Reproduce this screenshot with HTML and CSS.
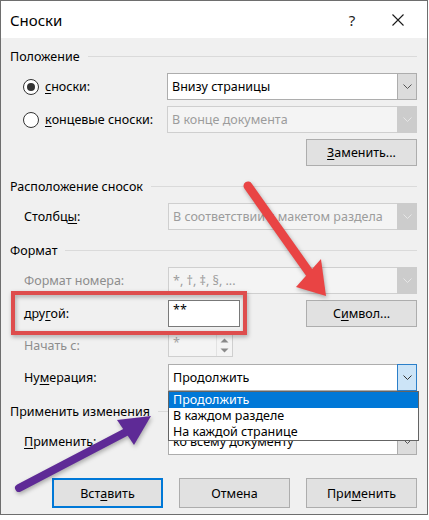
FILE: index.html
```html
<!DOCTYPE html>
<html lang="ru">
<head>
    <meta charset="UTF-8">
    <title>Сноски</title>
    <link rel="stylesheet" href="styles.css">
</head>
<body>
    <div class="dialog">
        <div class="titlebar">
            <span class="title">Сноски</span>
            <span class="cap-btn help">?</span>
            <span class="cap-btn close">
                <svg width="12" height="12" viewBox="0 0 12 12"><path d="M0.5 0.5 L11.5 11.5 M11.5 0.5 L0.5 11.5" stroke="#1a1a1a" stroke-width="1.1" fill="none"/></svg>
            </span>
        </div>

        <div class="content">
            <!-- Положение -->
            <div class="group">Положение</div>
            <div class="row">
                <div class="label radio"><span class="circle on"></span><u>с</u>носки:</div>
                <div class="select">
                    <span class="val">Внизу страницы</span>
                    <span class="drop"><svg width="9" height="5" viewBox="0 0 9 5"><path d="M0.5 0.5 L4.5 4.5 L8.5 0.5" stroke="#555" fill="none"/></svg></span>
                </div>
            </div>
            <div class="row">
                <div class="label radio"><span class="circle"></span><u>к</u>онцевые сноски:</div>
                <div class="select off">
                    <span class="val">В конце документа</span>
                    <span class="drop"><svg width="9" height="5" viewBox="0 0 9 5"><path d="M0.5 0.5 L4.5 4.5 L8.5 0.5" stroke="#e6e6e6" fill="none"/></svg></span>
                </div>
            </div>
            <div class="row right">
                <div class="btn"><u>З</u>аменить...</div>
            </div>

            <!-- Расположение сносок -->
            <div class="group">Расположение сносок</div>
            <div class="row">
                <div class="label">Столбц<u>ы</u>:</div>
                <div class="select off">
                    <span class="val">В соответствии с макетом раздела</span>
                    <span class="drop"><svg width="9" height="5" viewBox="0 0 9 5"><path d="M0.5 0.5 L4.5 4.5 L8.5 0.5" stroke="#e6e6e6" fill="none"/></svg></span>
                </div>
            </div>

            <!-- Формат -->
            <div class="group">Формат</div>
            <div class="row">
                <div class="label dim">Формат номера:</div>
                <div class="select off">
                    <span class="val">*, †, ‡, §, ...</span>
                    <span class="drop"><svg width="9" height="5" viewBox="0 0 9 5"><path d="M0.5 0.5 L4.5 4.5 L8.5 0.5" stroke="#e6e6e6" fill="none"/></svg></span>
                </div>
            </div>
            <div class="row">
                <div class="label">дру<u>г</u>ой:</div>
                <div class="input">**</div>
                <div class="btn push"><span>С<u>и</u>мвол...</span></div>
            </div>
            <div class="row short">
                <div class="label dim">Начать с:</div>
                <div class="spin">
                    <span class="val">*</span>
                    <span class="spin-btns">
                        <svg width="9" height="5" viewBox="0 0 9 5"><path d="M0.5 4.5 L4.5 0.5 L8.5 4.5 Z" fill="#8a8a8a"/></svg>
                        <svg width="9" height="5" viewBox="0 0 9 5"><path d="M0.5 0.5 L4.5 4.5 L8.5 0.5 Z" fill="#8a8a8a"/></svg>
                    </span>
                </div>
            </div>
            <div class="row">
                <div class="label">Ну<u>м</u>ерация:</div>
                <div class="select open">
                    <span class="val">Продолжить</span>
                    <span class="drop"><svg width="9" height="5" viewBox="0 0 9 5"><path d="M0.5 0.5 L4.5 4.5 L8.5 0.5" stroke="#333" fill="none"/></svg></span>
                </div>
            </div>

            <!-- Применить изменения -->
            <div class="group">Применить изменения</div>
            <div class="row">
                <div class="label"><u>П</u>рименить:</div>
                <div class="select">
                    <span class="val">ко всему документу</span>
                    <span class="drop"><svg width="9" height="5" viewBox="0 0 9 5"><path d="M0.5 0.5 L4.5 4.5 L8.5 0.5" stroke="#555" fill="none"/></svg></span>
                </div>
            </div>

            <div class="actions">
                <div class="btn wide focus">Вст<u>а</u>вить</div>
                <div class="btn wide">Отмена</div>
                <div class="btn wide">При<u>м</u>енить</div>
            </div>
        </div>

        <!-- раскрытый список -->
        <ul class="listbox">
            <li class="sel">Продолжить</li>
            <li>В каждом разделе</li>
            <li>На каждой странице</li>
        </ul>

        <!-- пометки поверх скриншота -->
        <svg class="marks" width="429" height="520" viewBox="0 0 429 520">
            <rect x="13" y="293" width="232" height="40" fill="none" stroke="#de4d4d" stroke-width="4"/>
            <line x1="248" y1="186" x2="311" y2="275" stroke="#e94444" stroke-width="9" stroke-linecap="round"/>
            <polygon points="326,296 296,287 321,259" fill="#e94444"/>
            <line x1="19" y1="488" x2="128" y2="431" stroke="#5e2a96" stroke-width="8" stroke-linecap="round"/>
            <polygon points="151,416 117,420 134,445" fill="#5e2a96"/>
        </svg>
    </div>
</body>
</html>
```

FILE: styles.css
```css
body {
    margin: 0;
    background: #fff;
    font-family: "Noto Sans", "Open Sans", sans-serif;
    font-size: 12.5px;
    color: #000;
}

.dialog {
    position: relative;
    width: 428px;
    height: 515px;
    box-sizing: border-box;
    border: 1px solid #6e6e6e;
    background: #f0f0f0;
}

/* title bar */
.titlebar {
    height: 37px;
    background: #fff;
    display: flex;
    align-items: center;
    padding: 0 6px 0 9px;
}

.title {
    flex: 1;
    font-size: 15px;
}

.cap-btn {
    width: 46px;
    height: 37px;
    display: flex;
    align-items: center;
    justify-content: center;
    font-size: 15px;
    color: #222;
}

.content {
    padding: 8px 10px 0 9px;
}

/* group headers with line */
.group {
    display: flex;
    align-items: center;
    height: 20px;
    margin-top: 10px;
}

.group:first-child {
    margin-top: 0;
}

.group::after {
    content: '';
    flex: 1;
    height: 1px;
    background: #dadada;
    margin-left: 8px;
}

.row {
    display: flex;
    align-items: center;
    height: 27px;
    padding-left: 14px;
    margin-top: 6px;
}

.group + .row {
    margin-top: 7px;
}

.row.short {
    height: 25px;
}

.row.right {
    justify-content: flex-end;
}

.label {
    width: 144px;
    flex: none;
    white-space: nowrap;
}

.label.dim {
    color: #8d8d8d;
}

.radio {
    display: flex;
    align-items: center;
    margin-left: -1px;
}

.circle {
    width: 14px;
    height: 14px;
    border: 1px solid #333;
    border-radius: 50%;
    background: #fff;
    margin-right: 6px;
    position: relative;
}

.circle.on::after {
    content: '';
    position: absolute;
    left: 3px;
    top: 3px;
    width: 8px;
    height: 8px;
    border-radius: 50%;
    background: #333;
}

u {
    text-decoration-thickness: 1px;
    text-underline-offset: 2px;
}

/* combo boxes */
.select {
    width: 250px;
    height: 27px;
    box-sizing: border-box;
    border: 1px solid #adadad;
    background: #fff;
    display: flex;
    align-items: center;
    padding-left: 4px;
}

.select .val {
    flex: 1;
    white-space: nowrap;
    overflow: hidden;
}

.drop {
    width: 20px;
    height: 27px;
    margin: -1px -1px -1px 0;
    box-sizing: border-box;
    border: 1px solid #adadad;
    background: #dcdcdc;
    display: flex;
    align-items: center;
    justify-content: center;
}

.select.off {
    background: #f4f4f4;
    border-color: #cfcfcf;
    color: #9c9c9c;
}

.select.off .drop {
    background: #cccccc;
    border-color: #cccccc;
}

.select.open .drop {
    background: #cce4f7;
    border-color: #2b7fc9;
}

.input {
    width: 72px;
    height: 27px;
    box-sizing: border-box;
    border: 1px solid #7a7a7a;
    background: #fff;
    padding: 2px 4px;
    line-height: 14px;
}

.spin {
    width: 65px;
    height: 23px;
    box-sizing: border-box;
    border: 1px solid #cfcfcf;
    background: #f4f4f4;
    display: flex;
    color: #a6a6a6;
}

.spin .val {
    flex: 1;
    padding: 1px 4px;
    line-height: 14px;
}

.spin-btns {
    width: 15px;
    display: flex;
    flex-direction: column;
    justify-content: space-around;
    align-items: center;
    border-left: 1px solid #e2e2e2;
}

/* buttons */
.btn {
    width: 111px;
    height: 27px;
    box-sizing: border-box;
    border: 1px solid #adadad;
    background: #e1e1e1;
    display: flex;
    align-items: center;
    justify-content: center;
}

.btn.push {
    margin-left: auto;
}

.actions {
    display: flex;
    justify-content: flex-end;
    gap: 16px;
    margin-top: 23px;
}

.btn.wide {
    height: 30px;
}

.btn.focus {
    border: 2px solid #0078d7;
}

/* dropdown list of Нумерация */
.listbox {
    position: absolute;
    left: 167px;
    top: 390px;
    width: 251px;
    box-sizing: border-box;
    margin: 0;
    padding: 0;
    list-style: none;
    border: 1px solid #646464;
    background: #fff;
}

.listbox li {
    height: 16px;
    line-height: 16px;
    padding-left: 4px;
    white-space: nowrap;
}

.listbox li.sel {
    background: #0078d7;
    color: #fff;
}

.marks {
    position: absolute;
    left: -1px;
    top: -1px;
    pointer-events: none;
    filter: drop-shadow(1px 2px 2px rgba(0, 0, 0, 0.3));
}
```
